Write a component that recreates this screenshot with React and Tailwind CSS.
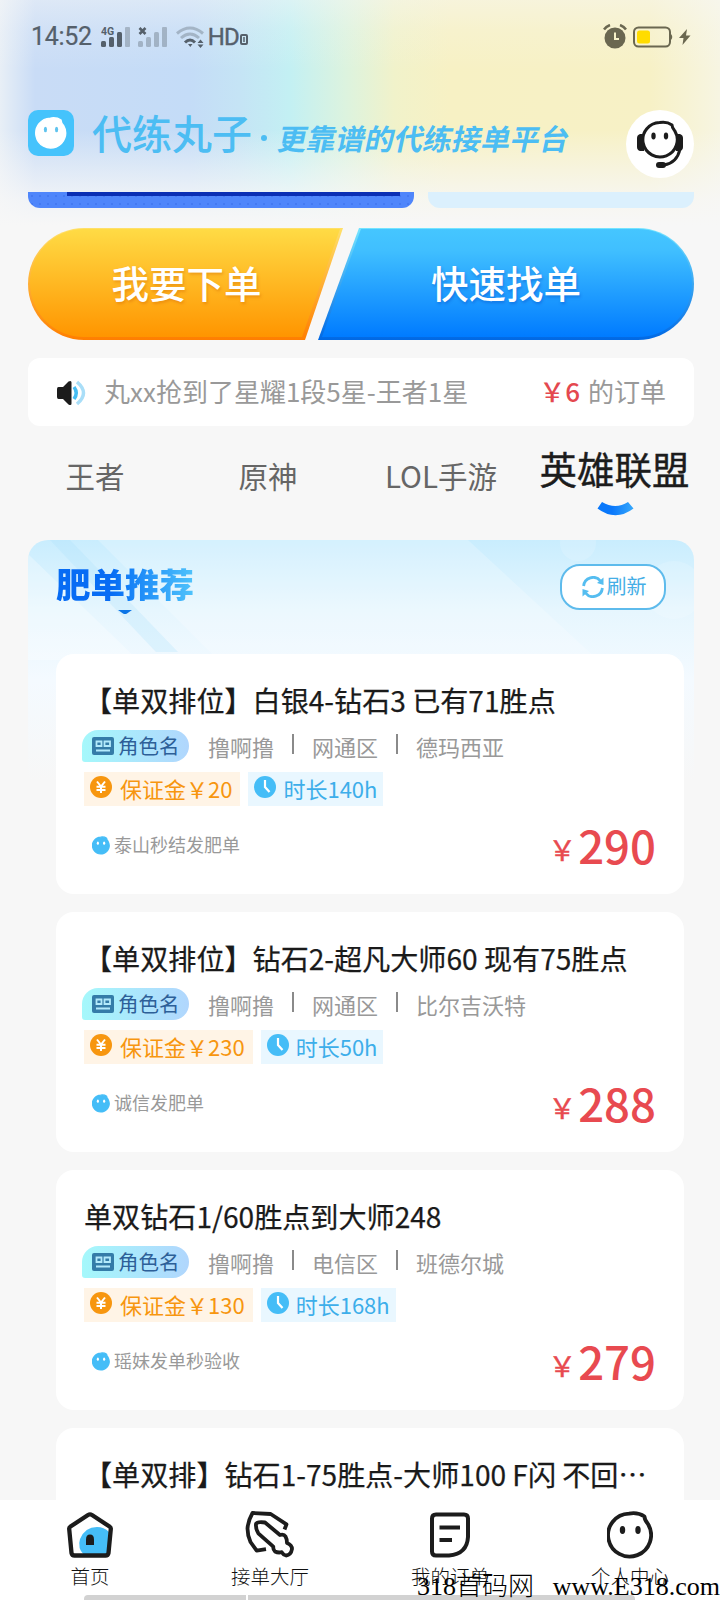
const games = ['王者', '原神', 'LOL手游', '英雄联盟'];
const activeGame = '英雄联盟';

const orders = [
  {
    id: 1,
    title: '【单双排位】白银4-钻石3 已有71胜点',
    servers: ['撸啊撸', '网通区', '德玛西亚'],
    deposit: 20,
    hours: 140,
    sender: '泰山秒结发肥单',
    price: 290,
  },
  {
    id: 2,
    title: '【单双排位】钻石2-超凡大师60 现有75胜点',
    servers: ['撸啊撸', '网通区', '比尔吉沃特'],
    deposit: 230,
    hours: 50,
    sender: '诚信发肥单',
    price: 288,
  },
  {
    id: 3,
    title: '单双钻石1/60胜点到大师248',
    servers: ['撸啊撸', '电信区', '班德尔城'],
    deposit: 130,
    hours: 168,
    sender: '瑶妹发单秒验收',
    price: 279,
  },
];

// 丸子脸轮廓, 46x48
const FACE = 'M37.5 5.5Q31 1 22 2.6A21.5 21.5 0 1 0 41 13Q37.5 9 37.5 5.5z';

const StatusBar = () => (
  <div className="flex h-[72px] items-center pt-px pr-[29px] pl-[31px] font-['Roboto',sans-serif] text-[#55606b]">
    <span className="text-[25px] leading-none tracking-[-0.3px] [-webkit-text-stroke:0.2px_#55606b]">14:52</span>
    <svg className="ml-[9px]" width="30" height="22" viewBox="0 0 30 22" fill="currentColor">
      <text x="0" y="8.5" fontSize="10.5" fontWeight="700" fontFamily="Roboto">4G</text>
      <rect x="0" y="15" width="5" height="6" rx="1.5" />
      <rect x="8" y="11" width="5" height="10" rx="1.5" />
      <rect x="16" y="6" width="5" height="15" rx="1.5" />
      <rect x="24" y="1" width="5" height="20" rx="1" opacity=".35" />
    </svg>
    <svg className="ml-[7px]" width="30" height="22" viewBox="0 0 30 22" fill="currentColor">
      <path d="M1.5 2l6 6M7.5 2l-6 6" stroke="currentColor" strokeWidth="2.6" />
      <g opacity=".35">
        <rect x="0" y="15" width="5" height="6" rx="1.5" />
        <rect x="8" y="11" width="5" height="10" rx="1.5" />
        <rect x="16" y="6" width="5" height="15" rx="1.5" />
        <rect x="24" y="1" width="5" height="20" rx="1" />
      </g>
    </svg>
    <svg className="ml-[8px]" width="29" height="22" viewBox="0 0 29 22" fill="none">
      <g stroke="currentColor" strokeWidth="3">
        <path d="M1 7.5q13-11 26 0" opacity=".35" />
        <path d="M5 12q9-8 18 0" opacity=".35" />
        <path d="M9 16.5q5-5 10 0" />
      </g>
      <path d="M12 18h4.5l-2.2 3zM21.5 17l3-3.5 3 3.5zM21.5 18.5l3 3.5 3-3.5z" fill="currentColor" />
    </svg>
    <span className="ml-[3px] text-[24px] leading-none tracking-[-1px] [-webkit-text-stroke:0.4px_#55606b]">HD</span>
    <svg className="mt-[7px] ml-px" width="8" height="12" viewBox="0 0 8 12" fill="none">
      <rect x="1" y="1" width="6" height="9" rx="1" stroke="currentColor" strokeWidth="2" />
      <path d="M4 3v5" stroke="currentColor" strokeWidth="1.5" />
    </svg>
    <div className="ml-auto flex items-center text-[#6a6750]">
      <svg width="24" height="25" viewBox="0 0 24 25" fill="none">
        <circle cx="12" cy="14" r="10.5" fill="currentColor" />
        <path d="M1 5.5q2-3 6-4.5M23 5.5q-2-3-6-4.5" stroke="currentColor" strokeWidth="2.5" />
        <path d="M12 8.5V15h4" stroke="#f6f1c8" strokeWidth="2" />
      </svg>
      <svg className="ml-[6px]" width="41" height="22" viewBox="0 0 41 22" fill="none">
        <rect x="1" y="1.5" width="36" height="19" rx="4.5" stroke="currentColor" strokeWidth="2" />
        <rect x="4" y="4.5" width="13" height="13" rx="2.5" fill="#ffdc00" />
        <path d="M38 8q2.5 3 0 6z" fill="currentColor" />
      </svg>
      <svg className="ml-[5px]" width="12" height="16" viewBox="0 0 12 16" fill="currentColor">
        <path d="M8 0L0 9h4.5L3.5 16 11.5 6.5H7z" />
      </svg>
    </div>
  </div>
);

const Header = () => (
  <header className="relative h-[192px]">
    <StatusBar />
    <div className="flex items-start pr-[26px] pl-7">
      <div className="mt-[38px] flex h-[46px] w-[46px] items-center justify-center rounded-[10px] bg-[#45c3fc]">
        <svg width="32" height="34" viewBox="0 0 46 48">
          <path d={FACE} fill="#fff" stroke="#fff" strokeWidth="2" strokeLinejoin="round" />
          <ellipse cx="15" cy="19" rx="2.3" ry="4" fill="#5fc3ee" />
          <ellipse cx="31" cy="19" rx="2.3" ry="4" fill="#5fc3ee" />
        </svg>
      </div>
      <h1 className="mt-[40px] ml-[18px] text-[40px] leading-[40px] font-medium text-[#4cbdf3]">代练丸子</h1>
      <span className="mt-[63px] ml-[9px] h-[6px] w-[6px] rounded-full bg-[#4cbdf3]" />
      <p className="mt-[50px] ml-[12px] -skew-x-12 text-[29px] leading-[30px] font-bold tracking-[0.1px] text-[#4cbdf3]">
        更靠谱的代练接单平台
      </p>
      <div className="mt-[38px] ml-auto flex h-[68px] w-[68px] items-center justify-center rounded-full bg-white">
        <svg width="46" height="48" viewBox="0 0 46 48" fill="none" stroke="#1c1c1c" strokeWidth="3">
          <path d={FACE} transform="translate(5 .5) scale(.8)" strokeWidth="3.8" strokeLinejoin="round" />
          <ellipse cx="16.5" cy="16" rx="2.2" ry="3.4" fill="#1c1c1c" stroke="none" />
          <ellipse cx="29" cy="16" rx="2.2" ry="3.4" fill="#1c1c1c" stroke="none" />
          <path d="M7 14v17H3q-3-1-3-4v-9q0-3 3-4zM39 14v17h4q3-1 3-4v-9q0-3-3-4z" fill="#1c1c1c" stroke="none" />
          <path d="M43 29q-3 14-16 16" />
          <rect x="19" y="42" width="10" height="6" rx="3" fill="#1c1c1c" stroke="none" />
        </svg>
      </div>
    </div>
  </header>
);

const ActionButtons = () => (
  <div className="mt-5 flex h-[112px] px-7 text-[37.5px] leading-none font-medium text-white">
    <button className="relative h-[112px] w-[315px]">
      <svg className="absolute inset-0" width="315" height="112" viewBox="0 0 315 112">
        <defs>
          <linearGradient id="orange" x1="0" y1="0" x2="0" y2="1">
            <stop offset="0" stopColor="#ffdb45" />
            <stop offset="1" stopColor="#ff9500" />
          </linearGradient>
          <linearGradient id="orangeEdge" x1="0" y1="0" x2="0" y2="1">
            <stop offset="0" stopColor="#ffe069" />
            <stop offset="1" stopColor="#ff7e00" />
          </linearGradient>
        </defs>
        <path d="M56 0H315L277 112H56A56 56 0 0 1 56 0z" fill="url(#orangeEdge)" />
        <path d="M56 1H312L274 109H56A54 54 0 0 1 56 1z" fill="url(#orange)" />
      </svg>
      <span className="relative -mt-[5px] block w-[317px] [text-shadow:1px_2px_3px_rgba(200,90,0,.35)]">我要下单</span>
    </button>
    <button className="relative -ml-[25px] h-[112px] w-[376px]">
      <svg className="absolute inset-0" width="376" height="112" viewBox="0 0 376 112">
        <defs>
          <linearGradient id="blue" x1="0" y1="0" x2="0" y2="1">
            <stop offset="0" stopColor="#45c6ff" />
            <stop offset=".2" stopColor="#40bfff" />
            <stop offset="1" stopColor="#007bff" />
          </linearGradient>
          <linearGradient id="blueEdge" x1="0" y1="0" x2="0" y2="1">
            <stop offset="0" stopColor="#74e4ff" />
            <stop offset="1" stopColor="#0068e4" />
          </linearGradient>
        </defs>
        <path d="M41 0H320A56 56 0 0 1 320 112H0z" fill="url(#blueEdge)" />
        <path d="M43 1H320A54 54 0 0 1 320 109H4z" fill="url(#blue)" />
      </svg>
      <span className="relative -mt-[5px] block w-[376px] [text-shadow:1px_2px_3px_rgba(0,60,180,.35)]">快速找单</span>
    </button>
  </div>
);

const Notice = () => (
  <div className="mt-[18px] mr-[26px] ml-7 flex h-[68px] items-center rounded-xl bg-white pr-7 pl-7 text-[26px] leading-none text-[#999]">
    <svg className="mt-[2px] ml-px" width="30" height="26" viewBox="0 0 30 26" fill="none">
      <path d="M1.5 7H6l5.5-5.5q3-1.5 3 1v21q0 2.5-3 1L6 19H1.5Q0 19 0 17V9q0-2 1.5-2z" fill="#1c1c1c" />
      <path d="M17 7q4.5 6 0 12" stroke="#45bdf3" strokeWidth="3.5" />
      <path d="M20 2q13 11 0 22" stroke="#a9def8" strokeWidth="3.5" />
    </svg>
    <span className="-mt-[2px] ml-[17px]">丸xx抢到了星耀1段5星-王者1星</span>
    <span className="-mt-[2px] ml-auto">
      <span className="mr-[2px] font-medium text-[#e4484f]">￥6</span> 的订单
    </span>
  </div>
);

const GameTabs = () => (
  <div className="grid h-[114px] grid-cols-4 pr-[19px] pl-[9px]">
    {games.map((game) => (
      <button key={game} className="flex flex-col items-center whitespace-nowrap">
        {game === activeGame ? (
          <>
            <span className="mt-[23px] text-[37.5px] leading-[38px] text-[#1c1c1c] [-webkit-text-stroke:0.4px_#1c1c1c]">
              {game}
            </span>
            <svg className="mt-[15px] ml-px" width="37" height="14" viewBox="0 0 37 14">
              <defs>
                <linearGradient id="smile">
                  <stop offset=".4" stopColor="#0a78fb" />
                  <stop offset="1" stopColor="#36a8fb" />
                </linearGradient>
              </defs>
              <path d="M5 0Q18.5 8 31 0L36.5 6.5Q18.5 20 .5 6.5z" fill="url(#smile)" />
            </svg>
          </>
        ) : (
          <span className="mt-[34px] -ml-px text-[29.5px] leading-[30px] text-[#666]">{game}</span>
        )}
      </button>
    ))}
  </div>
);

const OrderCard = ({ order }) => (
  <div className="h-[240px] rounded-[18px] bg-white px-7 pt-[31px]">
    <h3 className="text-[28.1px] leading-[30px] whitespace-nowrap text-[#1a1a1a] [-webkit-text-stroke:0.25px_#1a1a1a]">
      {order.title}
    </h3>
    <div className="mt-[15px] flex items-center text-[22px] leading-none text-[#999]">
      <span className="-ml-[2px] flex h-8 w-[107px] items-center rounded-[16px_16px_16px_3px] bg-linear-to-r from-[#a5f8fb] to-[#b0d6fd] pl-[10px] text-[20.5px] text-[#2d5f98]">
        <svg className="mr-[4px]" width="22" height="18" viewBox="0 0 22 18" fill="none">
          <rect width="22" height="18" rx="2" fill="#347ca8" />
          <path d="M4.5 4.5h5V9h-5zM12.5 9H18V4.500h-5.500zM4 13.500h14" stroke="#b3eafb" strokeWidth="1.8" />
        </svg>
        <span className="-mt-[2px]">角色名</span>
      </span>
      {order.servers.map((server, i) => (
        <span key={server} className="flex items-center">
          {i > 0 && <i className="mx-[18px] mb-[4px] h-5 w-[2px] bg-[#8a8a8a]" />}
          <span className={i === 0 ? 'ml-[19px]' : ''}>{server}</span>
        </span>
      ))}
    </div>
    <div className="mt-[10px] flex h-[34px] gap-2 text-[22px] leading-[32px]">
      <span className="flex bg-[#fff4e6] pr-[8px] pl-[6px] text-[#f7960f]">
        <svg className="mt-1 mr-[8px]" width="22" height="22" viewBox="0 0 22 22" fill="none">
          <circle cx="11" cy="11" r="11" fill="#f7960f" />
          <path d="M7 5.5l4 5 4-5M6.5 10.8h9M6.5 14h9M11 10.5V17" stroke="#fff" strokeWidth="2" />
        </svg>
        保证金￥{order.deposit}
      </span>
      <span className="flex bg-[#e9f7ff] pr-[6px] pl-[6px] text-[#3daeea]">
        <svg className="mt-1 mr-[7px]" width="22" height="22" viewBox="0 0 22 22" fill="none">
          <circle cx="11" cy="11" r="11" fill="#45bdf7" />
          <path d="M11 4v7l4.5 5" stroke="#fff" strokeWidth="2.2" />
        </svg>
        时长{order.hours}h
      </span>
    </div>
    <div className="mt-[10px] flex h-[58px] items-center justify-between">
      <span className="flex items-center pl-2 text-[18px] leading-none text-[#999]">
        <svg className="mr-[4px]" width="18" height="19" viewBox="0 0 46 48">
          <path d={FACE} fill="#45bdf7" stroke="#45bdf7" strokeWidth="3" strokeLinejoin="round" />
          <ellipse cx="15" cy="18" rx="2.8" ry="4" fill="#fff" />
          <ellipse cx="31" cy="18" rx="2.8" ry="4" fill="#fff" />
        </svg>
        <span className="-mt-[3px]">{order.sender}</span>
      </span>
      <span className="-mt-[2px] flex items-center text-[45.5px] leading-[58px] font-medium text-[#e84a50]">
        <span className="mt-[9px] mr-[2px] text-[28px] leading-none font-normal [-webkit-text-stroke:0.4px_#e84a50]">￥</span>
        {order.price}
      </span>
    </div>
  </div>
);

const FatOrders = () => (
  <section className="relative mr-[26px] ml-7 rounded-t-[20px] bg-[linear-gradient(180deg,#c9edfe_0,#e6f6fe_70px,#f4faff_140px,#f7f7f7_240px)] pr-[10px] pl-7">
    <svg className="absolute top-0 left-0 rounded-t-[20px]" width="666" height="120" viewBox="0 0 666 120">
      <path d="M70 0L190 120H570L440 0z" fill="#fff" opacity=".22" />
      <path d="M0 14L110 120H0z" fill="#fff" opacity=".3" />
      <path d="M22 0H42L150 112H128z" fill="#a9dffb" opacity=".25" />
      <circle cx="550" cy="3" r="18" fill="#fff" opacity=".15" />
      <circle cx="646" cy="50" r="29" fill="#fff" opacity=".15" />
    </svg>
    <div className="relative flex h-[114px] items-start justify-between pr-[18px]">
      <div>
        <h2 className="mt-[25px] bg-linear-to-r from-[#076cf4] from-40% to-[#4fc3fb] bg-clip-text text-[34.5px] leading-[36px] font-black text-transparent">
          肥单推荐
        </h2>
        <svg className="mt-[9px] ml-[62px]" width="14" height="4" viewBox="0 0 14 4">
          <path d="M0 0h14L9 3.500q-2 1-4 0z" fill="#0b74e6" />
        </svg>
      </div>
      <button className="mt-6 flex h-[46px] w-[106px] items-center justify-center rounded-[20px] border-2 border-[#5ebbec] bg-white text-[20px] leading-none text-[#45aee6]">
        <svg className="mr-[3px] ml-[2px]" width="22" height="22" viewBox="0 0 22 22" fill="none">
          <path d="M1.6 10A9.5 9.5 0 0 1 18.5 5M20.4 12A9.5 9.5 0 0 1 3.5 17" stroke="#55bdf0" strokeWidth="2.8" />
          <path d="M21.5 1.5V9l-6.5-2zM.5 20.5V13L7 15z" fill="#55bdf0" />
        </svg>
        <span className="-mt-[2px]">刷新</span>
      </button>
    </div>
    <div className="relative space-y-[18px]">
      {orders.map((order) => (
        <OrderCard key={order.id} order={order} />
      ))}
      <div className="h-[240px] rounded-[18px] bg-white px-7 pt-[31px]">
        <h3 className="text-[28.1px] leading-[30px] whitespace-nowrap text-[#1a1a1a] [-webkit-text-stroke:0.25px_#1a1a1a]">
          【单双排】钻石1-75胜点-大师100 F闪 不回…
        </h3>
      </div>
    </div>
  </section>
);

const HomeIcon = () => (
  <svg width="48" height="48" viewBox="0 0 48 48" fill="none">
    <path d="M18 44a16 16 0 0 1-4-16q5-12 17-12 7 0 12 5l-2 23z" fill="#45bdf7" />
    <path d="M22 4L4.5 15.5q-1.500 1-1.300 2.500L5.500 42q.5 2.500 3 2.500h31q2.500 0 3-2.500l2.300-24q.2-1.500-1.300-2.500L26 4q-2-1.200-4 0z" stroke="#1c1c1c" strokeWidth="4.3" strokeLinejoin="round" />
    <path d="M20 34v-5.5q0-5 4-5t4 5V34z" fill="#1c1c1c" />
  </svg>
);

const HallIcon = () => (
  <svg width="50" height="48" viewBox="0 0 50 48" fill="none" stroke="#1c1c1c" strokeWidth="3.8" strokeLinejoin="round">
    <path d="M39.5 18.5l2-5.2L25.7 3 7.5 2Q3 10 2.5 17.5q0 7 3 13.500l6.200 8.700 9.300-1.500" />
    <path d="M20 11.5L35 24q4-1 5.500 1.500T42 32q5 2 5 6-1 6-6 6.500-2.500-.5-4.300-3.300Q33 42 30 40.500 28 38.500 28.300 35.700L13.300 22.300Q10.500 18 11 13q1-2.500 9-1.500z" />
  </svg>
);

const OrdersIcon = () => (
  <svg width="40" height="46" viewBox="0 0 40 46" fill="none" stroke="#1c1c1c" strokeWidth="4">
    <path d="M6 2.5h28q4 0 4 4V25q-1 17-19 18.500H6q-4 0-4-4v-33q0-4 4-4z" />
    <path d="M9.5 15.5H30M9.5 28H22" />
  </svg>
);

const ProfileIcon = () => (
  <svg width="46" height="48" viewBox="0 0 46 48" fill="none">
    <path d={FACE} stroke="#1c1c1c" strokeWidth="3.8" strokeLinejoin="round" />
    <ellipse cx="15.5" cy="19" rx="2.7" ry="4" fill="#1c1c1c" />
    <ellipse cx="31" cy="19" rx="2.7" ry="4" fill="#1c1c1c" />
  </svg>
);

const navItems = [
  { label: '首页', Icon: HomeIcon },
  { label: '接单大厅', Icon: HallIcon },
  { label: '我的订单', Icon: OrdersIcon },
  { label: '个人中心', Icon: ProfileIcon },
];

const BottomNav = () => (
  <nav className="relative grid h-[100px] shrink-0 grid-cols-4 bg-white">
    {navItems.map(({ label, Icon }) => (
      <button key={label} className="flex flex-col items-center">
        <span className="mt-[10px] flex h-[50px] items-center">
          <Icon />
        </span>
        <span className="mt-[6px] text-[19.5px] leading-5 font-light text-[#111]">{label}</span>
      </button>
    ))}
    <div className="absolute bottom-0 left-[84px] flex h-[5px] w-[551px] gap-[2px]">
      <i className="w-[162px] rounded-tl bg-[#d2d2d2]" />
      <i className="flex-1 rounded-tr bg-[#d2d2d2]" />
    </div>
    {/* 水印 */}
    <div className="absolute -bottom-px left-[417px] flex h-[28px] w-[303px] items-center justify-between font-['Liberation_Serif','Noto_Sans_CJK_SC',serif] text-[26px] leading-none font-light whitespace-nowrap text-black">
      <span>318首码网</span>
      <span>www.E318.com</span>
    </div>
  </nav>
);

export default function App() {
  return (
    <div
      lang="zh-CN"
      className="relative flex h-[1600px] w-[720px] flex-col overflow-hidden bg-[#f7f7f7] font-['Noto_Sans_CJK_SC',sans-serif]"
    >
      <div className="absolute inset-x-0 top-0 h-[225px] bg-[linear-gradient(90deg,#e8eff6_0,#c9dcf6_35px,#c4dcf7_190px,#c5e4f5_240px,#c3f0f3_290px,#dcf3df_345px,#f1f2ca_395px,#f7f1c4_450px,#f7f1c6_650px,#f7f5e2_720px)]" />
      <div className="absolute inset-x-0 top-0 h-[225px] bg-[linear-gradient(180deg,rgba(247,247,247,.45)_0,rgba(247,247,247,.18)_30px,transparent_70px,transparent_130px,rgba(247,247,247,.5)_170px,rgba(247,247,247,.85)_200px,#f7f7f7_225px)]" />
      <main className="relative min-h-0 flex-1 overflow-hidden">
        <Header />
        <div className="flex h-4 gap-[14px] pr-[26px] pl-7">
          <div className="w-[386px] rounded-b-xl bg-[#4f86fb] bg-[radial-gradient(#447af2_1px,transparent_1.5px)] bg-[size:8px_8px] pl-[39px]">
            <div className="h-1 w-[333px] bg-[#0a2fb4]" />
          </div>
          <div className="flex-1 rounded-b-xl bg-[#dbf0fd]" />
        </div>
        <ActionButtons />
        <Notice />
        <GameTabs />
        <FatOrders />
      </main>
      <BottomNav />
    </div>
  );
}
